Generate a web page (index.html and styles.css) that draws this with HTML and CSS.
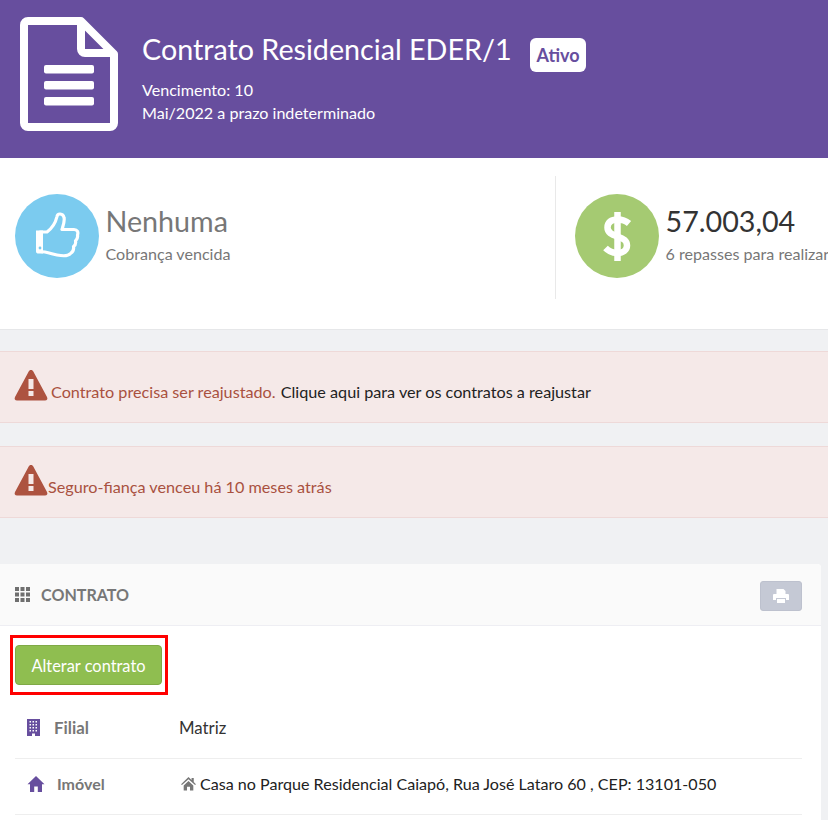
FILE: index.html
```html
<!DOCTYPE html>
<html lang="pt-BR">
<head>
<meta charset="utf-8">
<title>Contrato Residencial EDER/1</title>
<link rel="stylesheet" href="styles.css">
</head>
<body>
<header class="hero">
  <svg class="hero-icon" viewBox="0 0 98 114" aria-hidden="true">
    <path class="doc-line" d="M8 4H61L94 37V106a4 4 0 0 1-4 4H8a4 4 0 0 1-4-4V8a4 4 0 0 1 4-4Z"/>
    <path class="doc-line" d="M61 5V32a4 4 0 0 0 4 4H93"/>
    <rect class="doc-bar" x="24" y="48" width="50" height="8.500" rx="2"/>
    <rect class="doc-bar" x="24" y="64" width="50" height="8.500" rx="2"/>
    <rect class="doc-bar" x="24" y="80" width="50" height="8.500" rx="2"/>
  </svg>
  <div class="hero-text">
    <div class="hero-title"><h1>Contrato Residencial EDER/1</h1><span class="badge">Ativo</span></div>
    <p>Vencimento: 10</p>
    <p>Mai/2022 a prazo indeterminado</p>
  </div>
</header>

<section class="stats">
  <div class="stat stat-first">
    <div class="disc disc-blue">
      <svg viewBox="0 0 84 84" aria-hidden="true">
        <path class="thumb" d="M25 38H32C36 35 40.500 29 42 22.500C42.500 19 48 19 49 23.500C50 27 48 32 47 35.500H59C62.500 35.500 63.500 38.500 62.500 41C63 43.500 62 45.500 60.500 47C61 49.500 60 51.500 58.500 52.500C59 55.500 58 58 55.500 59.500C53 62.500 47 62 42 61C37 60 31 57.500 25 57.500Z"/>
        <path class="thumb-cuff" d="M21 36.500H28V59.500H22.500a2 2 0 0 1-1.500-2Z"/>
        <circle class="thumb-dot" cx="25" cy="54" r="1.400"/>
      </svg>
    </div>
    <div class="stat-text"><strong class="stat-muted">Nenhuma</strong><span>Cobrança vencida</span></div>
  </div>
  <div class="stat stat-second">
    <div class="disc disc-green">
      <svg viewBox="0 0 84 84" aria-hidden="true">
        <path class="dollar" d="M54 29.500C50.500 26.500 46.500 25.500 42.500 25.500C36 25.500 32.500 28.500 32.500 33.500C32.500 38.500 36.500 40.500 42.500 42.500C48.500 44.500 52 46.500 52 51.500C52 56 48 59 42.500 59C38 59 34 57.500 30.500 54"/>
        <path class="dollar" d="M42.500 18V67"/>
      </svg>
    </div>
    <div class="stat-text"><strong>57.003,04</strong><span class="nowrap">6 repasses para realizar</span></div>
  </div>
</section>

<div class="alert alert-first">
  <svg class="warn" viewBox="0 0 34 32" aria-hidden="true">
    <path class="warn-tri" d="M17 1C18 1 18.800 1.500 19.300 2.500L33 28C34 30 33 31.500 31 31.500H3C1 31.500 0 30 1 28L14.700 2.500C15.200 1.500 16 1 17 1Z"/>
    <rect class="warn-mark" x="14.500" y="10" width="5" height="10"/>
    <rect class="warn-mark" x="14.500" y="22" width="5" height="5"/>
  </svg>
  <span class="alert-msg alert-gap">Contrato precisa ser reajustado.</span>&nbsp;<a class="alert-link">Clique aqui para ver os contratos a reajustar</a>
</div>

<div class="alert alert-second">
  <svg class="warn" viewBox="0 0 34 32" aria-hidden="true">
    <path class="warn-tri" d="M17 1C18 1 18.800 1.500 19.300 2.500L33 28C34 30 33 31.500 31 31.500H3C1 31.500 0 30 1 28L14.700 2.500C15.200 1.500 16 1 17 1Z"/>
    <rect class="warn-mark" x="14.500" y="10" width="5" height="10"/>
    <rect class="warn-mark" x="14.500" y="22" width="5" height="5"/>
  </svg>
  <span class="alert-msg">Seguro-fiança venceu há 10 meses atrás</span>
</div>

<section class="panel">
  <div class="panel-head">
    <div class="panel-title">
      <svg class="grid-icon" viewBox="0 0 15 15" aria-hidden="true">
        <path d="M0 0h4v4H0zM5.500 0h4v4h-4zM11 0h4v4h-4zM0 5.500h4v4H0zM5.500 5.500h4v4h-4zM11 5.500h4v4h-4zM0 11h4v4H0zM5.500 11h4v4h-4zM11 11h4v4h-4z"/>
      </svg>
      <h2>CONTRATO</h2>
    </div>
    <button class="print-btn" type="button" aria-label="Imprimir">
      <svg viewBox="0 0 16 14" aria-hidden="true">
        <path d="M3.500 0h7L12.500 2v3h-9zM0 6a1 1 0 0 1 1-1h14a1 1 0 0 1 1 1v5h-3V9H3v2H0zM4 10h8v4H4z"/>
      </svg>
    </button>
  </div>
  <div class="panel-body">
    <div class="action-row">
      <button class="edit-btn" type="button">Alterar contrato</button>
      <span class="highlight"></span>
    </div>
    <div class="row">
      <div class="label">
        <svg class="icon-building" viewBox="0 0 13 17" aria-hidden="true">
          <path fill-rule="evenodd" d="M0 0H13V17H8V14.500H5V17H0ZM2.500 2v1.500h1.500V2ZM5.500 2v1.500H7V2ZM8.500 2v1.500H10V2ZM2.500 5v1.500h1.500V5ZM5.500 5v1.500H7V5ZM8.500 5v1.500H10V5ZM2.500 8v1.500h1.500V8ZM5.500 8v1.500H7V8ZM8.500 8v1.500H10V8ZM2.500 11v1.500h1.500V11ZM5.500 11v1.500H7V11ZM8.500 11v1.500H10V11Z"/>
        </svg>
        <span class="label-filial">Filial</span>
      </div>
      <div class="value">Matriz</div>
    </div>
    <div class="row">
      <div class="label">
        <svg class="icon-home" viewBox="0 0 17 16" aria-hidden="true">
          <path d="M8.500 0L17 8.200H14.500V16H10.300V10.500H6.700V16H2.500V8.200H0Z"/>
        </svg>
        <span>Imóvel</span>
      </div>
      <div class="value value-addr">
        <svg class="icon-home-small" viewBox="0 0 17 16" aria-hidden="true">
          <path d="M8.500 0L12 3.300V1H14.500V5.700L17 8.200L16 9.200L8.500 2.500L1 9.200L0 8.200ZM3 9.700L8.500 4.700L14 9.700V15.500H10.200V11H6.800V15.500H3Z"/>
        </svg>
        <span>Casa no Parque Residencial Caiapó, Rua José Lataro 60 , CEP: 13101-050</span>
      </div>
    </div>
  </div>
</section>
</body>
</html>
```
FILE: styles.css
```css
* { box-sizing: border-box; }

html, body {
  margin: 0;
  height: 820px;
  overflow: hidden;
}

body {
  background: #f0f1f3;
  font-family: Lato, "Noto Sans", sans-serif;
  font-size: 16px;
  color: #333;
}

.hero {
  display: flex;
  height: 158px;
  padding: 17px 0 0 20px;
  background: #674e9e;
  color: #fff;
}

.hero-icon { width: 98px; height: 114px; flex: none; }
.doc-line { fill: none; stroke: #fff; stroke-width: 8; stroke-linejoin: round; }
.doc-bar { fill: #fff; }

.hero-text { margin-left: 24px; padding-top: 11px; }
.hero-title { display: flex; align-items: center; height: 42px; margin-bottom: 8px; }
.hero-title h1 { margin: 0; font-size: 28.700px; font-weight: 400; line-height: 42px; }
.badge {
  margin: 11px 0 0 18.500px;
  padding: 0 6.500px;
  height: 34px;
  line-height: 34px;
  border-radius: 6px;
  background: #fff;
  color: #674e9e;
  font-size: 18px;
  font-weight: 700;
}
.hero-text p { margin: 0; font-size: 16.100px; line-height: 23px; }

.stats {
  display: flex;
  height: 172px;
  padding-top: 18px;
  background: #fff;
  border-bottom: 1px solid #e6e7e9;
}
.stat { display: flex; flex: none; height: 123px; padding-top: 18px; }
.stat-first { width: 556px; padding-left: 14.500px; border-right: 1px solid #e9e9e9; }
.stat-second { padding-left: 18.500px; }

.disc { width: 84px; height: 84px; flex: none; border-radius: 50%; }
.disc svg { display: block; width: 84px; height: 84px; }
.disc-blue { background: #7bcbef; }
.disc-green { background: #a5ca72; }

.thumb { fill: none; stroke: #fff; stroke-width: 3.200; stroke-linejoin: round; }
.thumb-cuff { fill: #fff; }
.thumb-dot { fill: #7bcbef; }
.dollar { fill: none; stroke: #fff; stroke-width: 6.500; }

.stat-text { display: flex; flex-direction: column; margin-left: 7px; }
.stat-text strong { font-size: 28.700px; font-weight: 400; line-height: 38px; margin-top: 8px; color: #333; }
.stat-text .stat-muted { color: #777; }
.stat-text span { font-size: 16.100px; line-height: 24px; margin-top: 2px; color: #777; }
.nowrap { white-space: nowrap; }

.alert {
  display: flex;
  align-items: center;
  height: 72px;
  padding: 0 0 0 15px;
  background: #f5e9e8;
  border-top: 1px solid #eed9d8;
  border-bottom: 1px solid #eed9d8;
  font-size: 16.200px;
  white-space: pre;
}
.alert-first { margin-top: 21px; }
.alert-second { margin-top: 23px; }
.warn { width: 34px; height: 32px; flex: none; margin: -4px 0 0 -1px; }
.warn-tri { fill: #ad5340; }
.warn-mark { fill: #f5e9e8; }
.alert-msg { color: #a9513f; padding-top: 9px; }
.alert-gap { margin-left: 3px; }
.alert-link { color: #222; padding: 9px 0 0 1px; }

.panel {
  width: 821px;
  height: 256px;
  margin-top: 46px;
  background: #fff;
  border-radius: 0 4px 0 0;
}
.panel-head {
  display: flex;
  align-items: center;
  justify-content: space-between;
  height: 62px;
  padding: 0 19px 0 15px;
  background: #fafafa;
  border-bottom: 1px solid #eeeef3;
  border-radius: 0 4px 0 0;
}
.panel-title { display: flex; align-items: center; }
.grid-icon { width: 15px; height: 15px; fill: #6f6f6f; }
.panel-title h2 { margin: 0 0 0 11px; font-size: 16.100px; font-weight: 700; color: #777; }
.print-btn {
  display: flex;
  align-items: center;
  justify-content: center;
  width: 42px;
  height: 30px;
  padding: 0;
  margin-top: 2px;
  background: #c5c9d5;
  border: 1px solid #bdc1ce;
  border-radius: 3px;
}
.print-btn svg { width: 16px; height: 14px; fill: #fff; }

.panel-body { padding: 0 19px 0 15px; }
.action-row { position: relative; padding-top: 19px; height: 77px; }
.edit-btn {
  display: block;
  width: 147px;
  height: 40px;
  padding: 0;
  background: #8fbe50;
  border: 1px solid #7fa946;
  border-radius: 4px;
  color: #fff;
  font: 400 16.400px Lato, sans-serif;
}
.highlight {
  position: absolute;
  left: -5px;
  top: 9px;
  width: 158px;
  height: 60px;
  border: 3px solid #f00;
  pointer-events: none;
}

.row {
  display: flex;
  align-items: center;
  height: 56px;
  padding-bottom: 6px;
  border-bottom: 1px solid #eee;
}
.label {
  display: flex;
  align-items: center;
  width: 164px;
  flex: none;
  padding-left: 12px;
  color: #777;
  font-weight: 700;
}
.label-filial { font-size: 16.800px; }
.icon-building { width: 13px; height: 17px; fill: #674e9e; margin-right: 14px; }
.icon-home { width: 18px; height: 16px; margin: 0 12px 0 0; fill: #674e9e; }
.value { color: #333; font-size: 16.800px; }
.value-addr { display: flex; align-items: center; padding-left: 2px; color: #222; font-size: 16.100px; }
.icon-home-small { width: 15px; height: 14px; fill: #777; margin-right: 4px; }
```
